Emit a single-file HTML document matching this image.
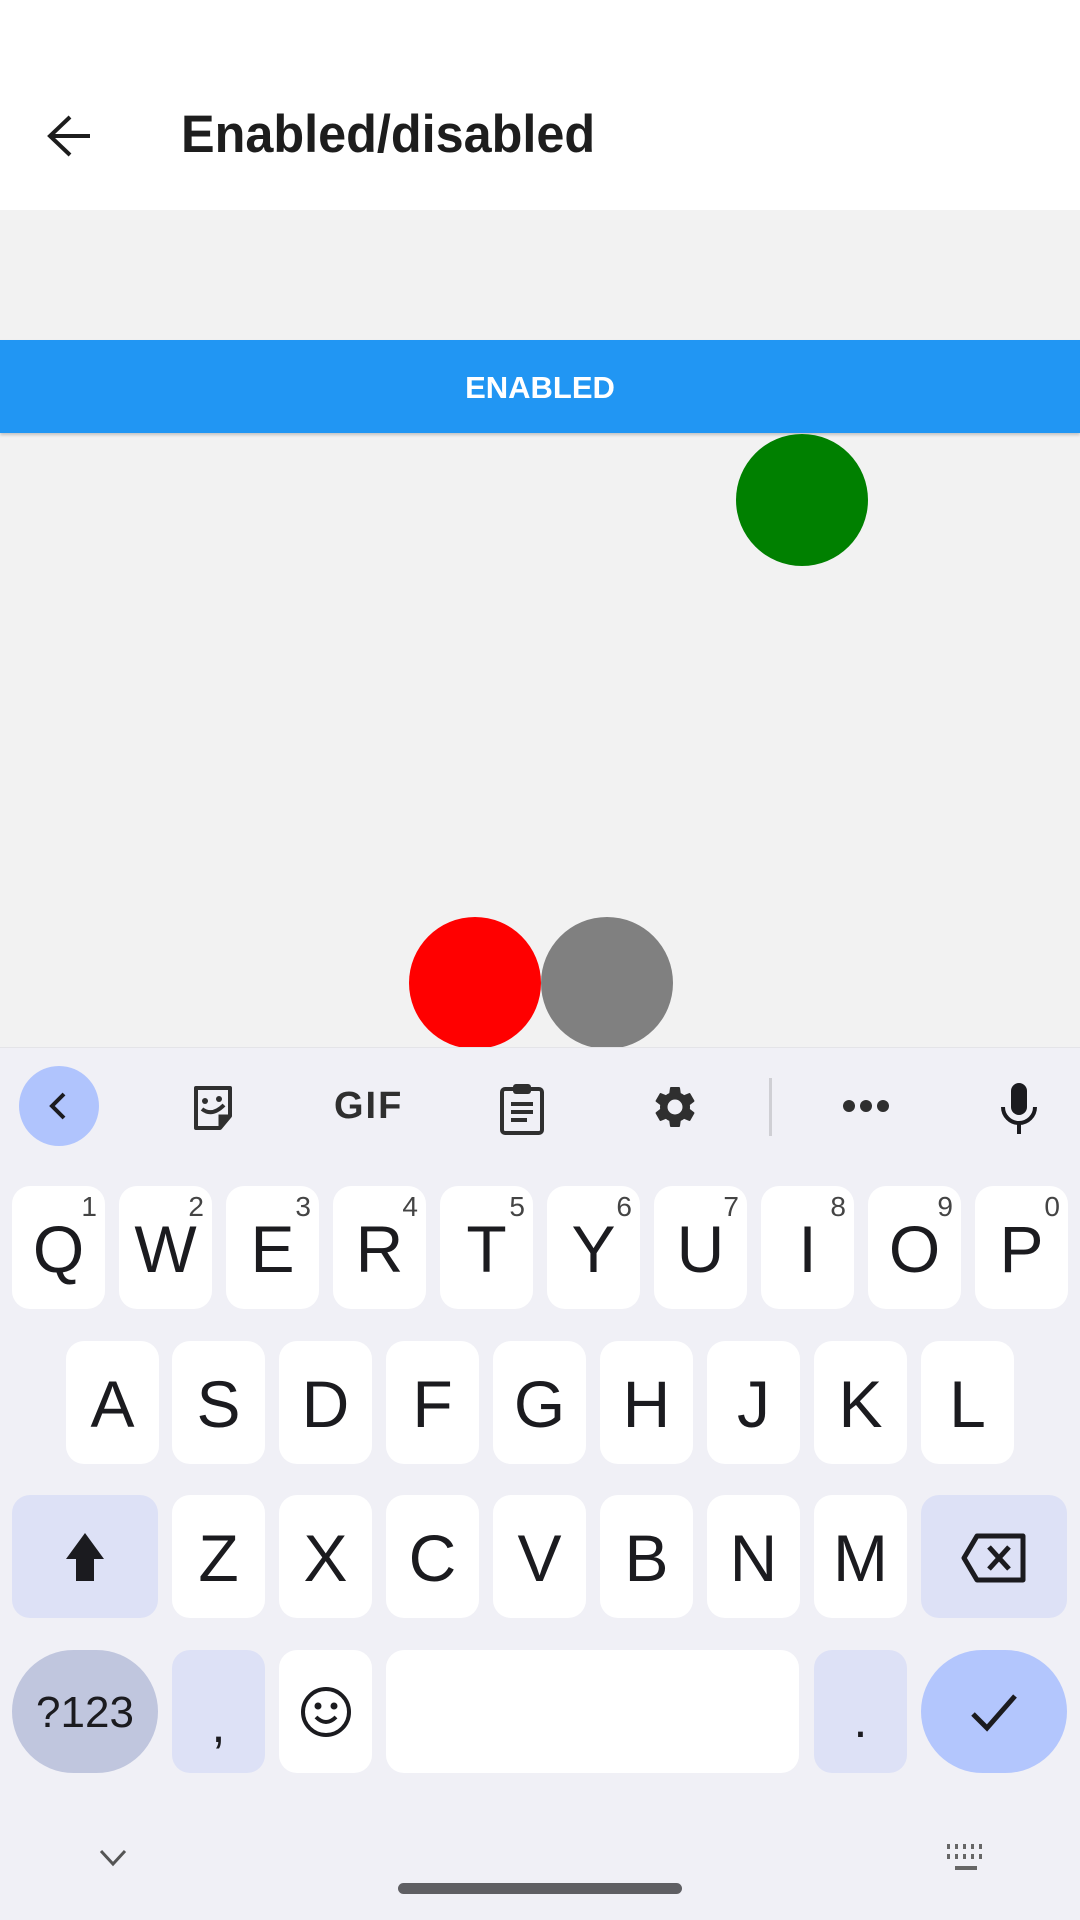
<!DOCTYPE html>
<html><head><meta charset="utf-8"><style>
*{margin:0;padding:0;box-sizing:border-box}
body{width:1080px;height:1920px;position:relative;overflow:hidden;background:#f2f2f2;font-family:"Liberation Sans",sans-serif}
.abs{position:absolute}
#top{left:0;top:0;width:1080px;height:210px;background:#fff}
#title{left:181px;top:105px;font-size:53px;font-weight:bold;line-height:60px;color:#1d1d1d;white-space:nowrap;transform-origin:left top;transform:scaleX(0.95)}
#btn{left:0;top:340px;width:1080px;height:93px;background:#2196f3;color:#fff;font-size:31px;font-weight:bold;text-align:center;line-height:95px;box-shadow:0 2px 3px rgba(0,0,0,.2)}
.c{border-radius:50%;width:132px;height:132px}
#kb{left:0;top:1047px;width:1080px;height:873px;background:#f0f0f6;border-top:1px solid #e4e4e8}
.k{position:absolute;background:#fff;border-radius:18px;height:123px;width:93px;color:#1b1b1f;font-size:66px;text-align:center;line-height:126px}
.k sup{position:absolute;right:8px;top:6px;font-size:28px;line-height:30px;color:#444}
.m{background:#dde1f6}
</style></head><body>
<div id="top" class="abs"></div>
<svg class="abs" style="left:44px;top:112px" width="50" height="50" viewBox="0 0 50 50"><path d="M46 24H8M26 5L6 24l20 19" fill="none" stroke="#1d1d1d" stroke-width="4"/></svg>
<div id="title" class="abs">Enabled/disabled</div>
<div id="btn" class="abs">ENABLED</div>
<div class="abs c" style="left:736px;top:434px;background:#008000"></div>
<div class="abs c" style="left:409px;top:917px;background:#ff0000"></div>
<div class="abs c" style="left:541px;top:917px;background:#808080"></div>

<div id="kb" class="abs">
<div class="abs" style="left:19px;top:18px;width:80px;height:80px;border-radius:50%;background:#b0c4fd"></div>
<svg class="abs" style="left:39px;top:38px" width="40" height="40" viewBox="0 0 40 40"><path d="M25 8L13 20l12 12" fill="none" stroke="#1b1b1f" stroke-width="4"/></svg>
<svg class="abs" style="left:188px;top:34px" width="50" height="50" viewBox="0 0 50 50"><path d="M8 6h34v28L32 46H8z" fill="none" stroke="#2f2f2f" stroke-width="4" stroke-linejoin="round"/><path d="M32 46V34h10" fill="#2f2f2f" stroke="#2f2f2f" stroke-width="3"/><circle cx="17" cy="19" r="3" fill="#2f2f2f"/><circle cx="31" cy="17" r="3" fill="#2f2f2f"/><path d="M14 27q10 8 22-4" fill="none" stroke="#2f2f2f" stroke-width="4"/></svg>
<div class="abs" style="left:334px;top:36px;font-size:38px;font-weight:bold;color:#2f2f2f;letter-spacing:2px;line-height:44px">GIF</div>
<svg class="abs" style="left:497px;top:32px" width="50" height="56" viewBox="0 0 50 56"><rect x="5" y="9" width="40" height="44" rx="3" fill="none" stroke="#2f2f2f" stroke-width="4"/><rect x="16" y="4" width="18" height="10" rx="3" fill="#2f2f2f"/><path d="M14 24h22M14 32h22M14 40h16" stroke="#2f2f2f" stroke-width="4"/></svg>
<svg class="abs" style="left:650px;top:34px" width="50" height="50" viewBox="0 0 24 24"><path fill="#2f2f2f" d="M19.14 12.94c.04-.3.06-.61.06-.94 0-.32-.02-.64-.07-.94l2.03-1.58a.49.49 0 00.12-.61l-1.920-3.32a.49.49 0 00-.59-.22l-2.39.96c-.5-.38-1.030-.7-1.62-.94l-.36-2.54a.48.48 0 00-.48-.41h-3.84c-.24 0-.43.17-.47.41l-.36 2.54c-.59.24-1.13.57-1.62.94l-2.39-.96a.48.48 0 00-.59.22L2.74 8.87c-.12.21-.08.47.12.61l2.03 1.58c-.05.3-.09.63-.09.94s.02.64.07.94l-2.03 1.58a.49.49 0 00-.12.61l1.92 3.32c.12.22.37.29.59.22l2.39-.96c.5.38 1.03.7 1.62.94l.36 2.540c.05.24.24.41.48.41h3.84c.24 0 .44-.17.47-.41l.36-2.54c.59-.24 1.13-.56 1.62-.94l2.39.96c.22.08.47 0 .59-.22l1.92-3.32c.12-.22.07-.47-.12-.61l-2.010-1.58zM12 15.6A3.6 3.6 0 1112 8.4a3.6 3.6 0 010 7.2z"/></svg>
<div class="abs" style="left:769px;top:30px;width:3px;height:58px;background:#cfcfd4"></div>
<div class="abs" style="left:843px;top:52px;width:12px;height:12px;border-radius:50%;background:#2f2f2f;box-shadow:17px 0 #2f2f2f,34px 0 #2f2f2f"></div>
<svg class="abs" style="left:999px;top:32px" width="40" height="56" viewBox="0 0 40 56"><rect x="12" y="3" width="16" height="32" rx="8" fill="#1b1b1f"/><path d="M4 27a16 16 0 0032 0M20 43v11" fill="none" stroke="#1b1b1f" stroke-width="4"/></svg>

<div style="position:absolute;left:0;top:0">
<div class="k" style="left:12px;top:138px">Q<sup>1</sup></div>
<div class="k" style="left:119px;top:138px">W<sup>2</sup></div>
<div class="k" style="left:226px;top:138px">E<sup>3</sup></div>
<div class="k" style="left:333px;top:138px">R<sup>4</sup></div>
<div class="k" style="left:440px;top:138px">T<sup>5</sup></div>
<div class="k" style="left:547px;top:138px">Y<sup>6</sup></div>
<div class="k" style="left:654px;top:138px">U<sup>7</sup></div>
<div class="k" style="left:761px;top:138px">I<sup>8</sup></div>
<div class="k" style="left:868px;top:138px">O<sup>9</sup></div>
<div class="k" style="left:975px;top:138px">P<sup>0</sup></div>

<div class="k" style="left:66px;top:293px">A</div>
<div class="k" style="left:172px;top:293px">S</div>
<div class="k" style="left:279px;top:293px">D</div>
<div class="k" style="left:386px;top:293px">F</div>
<div class="k" style="left:493px;top:293px">G</div>
<div class="k" style="left:600px;top:293px">H</div>
<div class="k" style="left:707px;top:293px">J</div>
<div class="k" style="left:814px;top:293px">K</div>
<div class="k" style="left:921px;top:293px">L</div>

<div class="k m" style="left:12px;top:447px;width:146px"><svg style="position:absolute;left:51px;top:35px" width="44" height="54" viewBox="0 0 44 54"><path d="M22 3L3 29h10v22h18V29h10z" fill="#1b1b1f"/></svg></div>
<div class="k" style="left:172px;top:447px">Z</div>
<div class="k" style="left:279px;top:447px">X</div>
<div class="k" style="left:386px;top:447px">C</div>
<div class="k" style="left:493px;top:447px">V</div>
<div class="k" style="left:600px;top:447px">B</div>
<div class="k" style="left:707px;top:447px">N</div>
<div class="k" style="left:814px;top:447px">M</div>
<div class="k m" style="left:921px;top:447px;width:146px"><svg style="position:absolute;left:38px;top:37px" width="70" height="52" viewBox="0 0 70 52"><path d="M18 4h46v44H18L5 26z" fill="none" stroke="#1b1b1f" stroke-width="5" stroke-linejoin="round"/><path d="M30 15l20 22M50 15L30 37" stroke="#1b1b1f" stroke-width="5"/></svg></div>

<div class="k" style="left:12px;top:602px;width:146px;border-radius:62px;background:#c0c6de;font-size:44px">?123</div>
<div class="k m" style="left:172px;top:602px;font-size:50px;line-height:150px">,</div>
<div class="k" style="left:279px;top:602px"><svg style="position:absolute;left:20px;top:35px" width="54" height="54" viewBox="0 0 54 54"><circle cx="27" cy="27" r="23" fill="none" stroke="#1b1b1f" stroke-width="4"/><circle cx="19" cy="21" r="3.5" fill="#1b1b1f"/><circle cx="35" cy="21" r="3.5" fill="#1b1b1f"/><path d="M17 32q10 10 20 0" fill="none" stroke="#1b1b1f" stroke-width="4"/></svg></div>
<div class="k" style="left:386px;top:602px;width:413px"></div>
<div class="k m" style="left:814px;top:602px;font-size:50px;line-height:140px">.</div>
<div class="k" style="left:921px;top:602px;width:146px;border-radius:62px;background:#b3c6fd"><svg style="position:absolute;left:48px;top:40px" width="50" height="44" viewBox="0 0 50 44"><path d="M4 24l14 14L46 6" fill="none" stroke="#1b1b1f" stroke-width="5"/></svg></div>
</div>

<svg class="abs" style="left:98px;top:800px" width="30" height="20" viewBox="0 0 30 20"><path d="M3 3l12 13L27 3" fill="none" stroke="#555" stroke-width="3"/></svg>
<div class="abs" style="left:398px;top:835px;width:284px;height:11px;border-radius:6px;background:#5f5f63"></div>
<svg class="abs" style="left:946px;top:795px" width="42" height="32" viewBox="0 0 42 32"><g fill="#666"><rect x="1" y="1" width="3" height="5"/><rect x="9" y="1" width="3" height="5"/><rect x="17" y="1" width="3" height="5"/><rect x="25" y="1" width="3" height="5"/><rect x="33" y="1" width="3" height="5"/><rect x="1" y="11" width="3" height="5"/><rect x="9" y="11" width="3" height="5"/><rect x="17" y="11" width="3" height="5"/><rect x="25" y="11" width="3" height="5"/><rect x="33" y="11" width="3" height="5"/><rect x="9" y="23" width="22" height="4"/></g></svg>
</div>
</body></html>
